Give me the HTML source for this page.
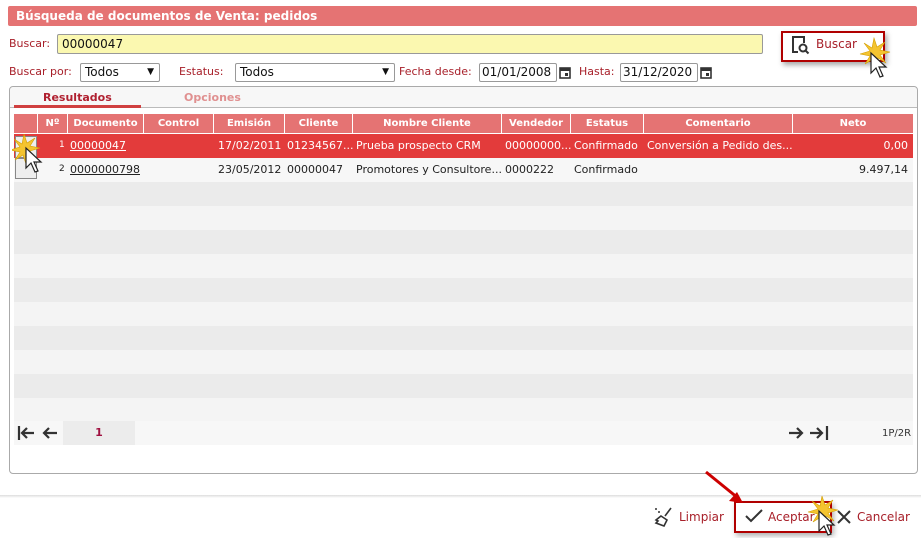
<!DOCTYPE html><html><head><meta charset="utf-8"><style>
*{box-sizing:border-box;margin:0;padding:0}
body{width:921px;height:537px;background:#fff;font-family:Verdana,"DejaVu Sans","Liberation Sans",sans-serif;font-size:11px;position:relative;overflow:hidden;color:#222}
.a{position:absolute;white-space:nowrap}
.lbl{color:#a8202a;font-size:11px}
.inp{position:absolute;border:1px solid #999;border-radius:2px;background:#fff;font-size:12px;padding:0 4px;line-height:17px;color:#111}
.th{position:absolute;top:114px;height:19px;background:#e57373;color:#fff;font-weight:bold;font-size:10px;text-align:center;line-height:19px;border-right:1px solid #fff}
.row{position:absolute;left:14px;width:899px;height:24px}
.c{position:absolute;font-size:11px;line-height:23px;white-space:nowrap}
</style></head><body>
<div class="a" style="left:8px;top:6px;width:909px;height:20px;background:#e57373;border-radius:2px;color:#fff;font-weight:bold;font-size:12px;line-height:20px;padding-left:8px">Búsqueda de documentos de Venta: pedidos</div>
<div class="a lbl" style="left:9px;top:37px">Buscar:</div>
<div class="inp" style="left:57px;top:34px;width:706px;height:20px;background:#fbf8b0;line-height:18px">00000047</div>
<div class="a" style="left:781px;top:31px;width:104px;height:31px;border:2px solid #b00000;box-shadow:2px 3px 5px rgba(0,0,0,.35)"></div>
<svg class="a" style="left:790px;top:34px" width="22" height="22" viewBox="0 0 22 22"><path d="M8 18H3V3h11v6" fill="none" stroke="#333" stroke-width="2"/><circle cx="13" cy="14" r="3.5" fill="none" stroke="#333" stroke-width="2"/><path d="M15.5 16.5l3 3" stroke="#333" stroke-width="2"/></svg>
<div class="a" style="left:816px;top:37px;color:#a8202a;font-size:12px">Buscar</div>
<svg class="a" style="left:858px;top:36px" width="36" height="46" viewBox="0 0 36 46"><path d="M16 2l3 9 8-5-5 8 10 2-10 3 6 8-8-5-2 10-3-9-8 5 5-8-10-2 10-3-6-8 8 5z" fill="#f4c430" stroke="#d39e00" stroke-width=".6"/><path d="M13 17v20l5-5 4 9 3-1-4-9h7z" fill="#fff" stroke="#222" stroke-width="1.2"/></svg>
<div class="a lbl" style="left:9px;top:65px">Buscar por:</div>
<div class="inp" style="left:80px;top:63px;width:80px;height:19px">Todos<span style="position:absolute;right:5px;font-size:9px">▼</span></div>
<div class="a lbl" style="left:179px;top:65px">Estatus:</div>
<div class="inp" style="left:235px;top:63px;width:160px;height:19px">Todos<span style="position:absolute;right:5px;font-size:9px">▼</span></div>
<div class="a lbl" style="left:399px;top:65px">Fecha desde:</div>
<div class="inp" style="left:479px;top:63px;width:78px;height:19px;padding:0 2px">01/01/2008</div>
<svg class="a" style="left:559px;top:66px" width="12" height="13"><rect x="1" y="2" width="10" height="10" fill="none" stroke="#333" stroke-width="1.6"/><rect x="1" y="2" width="10" height="3" fill="#333"/><rect x="6" y="7" width="3" height="3" fill="#333"/></svg>
<div class="a lbl" style="left:579px;top:65px">Hasta:</div>
<div class="inp" style="left:620px;top:63px;width:78px;height:19px;padding:0 2px">31/12/2020</div>
<svg class="a" style="left:700px;top:66px" width="12" height="13"><rect x="1" y="2" width="10" height="10" fill="none" stroke="#333" stroke-width="1.6"/><rect x="1" y="2" width="10" height="3" fill="#333"/><rect x="6" y="7" width="3" height="3" fill="#333"/></svg>
<div class="a" style="left:9px;top:86px;width:909px;height:388px;border:1px solid #aaa;border-radius:4px"></div>
<div class="a" style="left:10px;top:87px;width:907px;height:21px;background:#f7f7f7;border-bottom:1px solid #bbb;border-radius:4px 4px 0 0"></div>
<div class="a" style="left:43px;top:91px;color:#b02030;font-weight:bold;font-size:11px">Resultados</div>
<div class="a" style="left:14px;top:105px;width:127px;height:3px;background:#d04040"></div>
<div class="a" style="left:184px;top:91px;color:#e09090;font-weight:bold;font-size:11px">Opciones</div>
<div class="th" style="left:14px;width:24px"></div>
<div class="th" style="left:38px;width:30px">Nº</div>
<div class="th" style="left:68px;width:76px">Documento</div>
<div class="th" style="left:144px;width:70px">Control</div>
<div class="th" style="left:214px;width:71px">Emisión</div>
<div class="th" style="left:285px;width:68px">Cliente</div>
<div class="th" style="left:353px;width:149px">Nombre Cliente</div>
<div class="th" style="left:502px;width:69px">Vendedor</div>
<div class="th" style="left:571px;width:73px">Estatus</div>
<div class="th" style="left:644px;width:149px">Comentario</div>
<div class="th" style="left:793px;width:120px;border-right:0">Neto</div>
<div class="row" style="top:134px;background:#e33b3b;color:#fff">
<div class="c" style="left:45px;font-size:9px">1</div><div class="c" style="left:56px;text-decoration:underline">00000047</div><div class="c" style="left:204px">17/02/2011</div><div class="c" style="left:273px">01234567...</div><div class="c" style="left:342px">Prueba prospecto CRM</div><div class="c" style="left:491px">00000000...</div><div class="c" style="left:560px">Confirmado</div><div class="c" style="left:633px">Conversión a Pedido des...</div><div class="c" style="right:5px">0,00</div></div>
<div class="row" style="top:158px;background:#f7f7f7">
<div class="c" style="left:45px;font-size:9px">2</div><div class="c" style="left:56px;text-decoration:underline">0000000798</div><div class="c" style="left:204px">23/05/2012</div><div class="c" style="left:273px">00000047</div><div class="c" style="left:342px">Promotores y Consultore...</div><div class="c" style="left:491px">0000222</div><div class="c" style="left:560px">Confirmado</div><div class="c" style="right:5px">9.497,14</div></div>
<div class="row" style="top:182px;background:#ebebeb"></div><div class="row" style="top:206px;background:#f4f4f4"></div>
<div class="row" style="top:230px;background:#ebebeb"></div><div class="row" style="top:254px;background:#f4f4f4"></div>
<div class="row" style="top:278px;background:#ebebeb"></div><div class="row" style="top:302px;background:#f4f4f4"></div>
<div class="row" style="top:326px;background:#ebebeb"></div><div class="row" style="top:350px;background:#f4f4f4"></div>
<div class="row" style="top:374px;background:#ebebeb"></div><div class="row" style="top:398px;background:#f4f4f4"></div>
<div class="a" style="left:15px;top:136px;width:22px;height:22px;border:1px solid #888;background:#eee"></div>
<div class="a" style="left:15px;top:158px;width:22px;height:21px;border:1px solid #888;background:#eee"></div>
<svg class="a" style="left:12px;top:134px" width="40" height="46" viewBox="0 0 40 46"><path d="M12 0l3 9 8-5-5 8 10 2-10 3 6 8-8-5-2 10-3-9-8 5 5-8-10-2 10-3-6-8 8 5z" fill="#f4c430" stroke="#d39e00" stroke-width=".6"/><path d="M14 14v20l5-5 4 9 3-1-4-9h7z" fill="#fff" stroke="#222" stroke-width="1.2"/></svg>
<div class="row" style="top:421px;background:#f7f7f7"></div>
<div class="a" style="left:63px;top:421px;width:72px;height:24px;background:#ececec;color:#a01040;font-weight:bold;text-align:center;line-height:24px">1</div>
<svg class="a" style="left:17px;top:425px" width="44" height="16" viewBox="0 0 44 16"><path d="M2 1v14M17 8H5M10 3L5 8l5 5M40 8H27M32 3l-5 5 5 5" fill="none" stroke="#333" stroke-width="2.2"/></svg>
<svg class="a" style="left:786px;top:425px" width="44" height="16" viewBox="0 0 44 16"><path d="M3 8h13M11 3l5 5-5 5M24 8h12M31 3l5 5-5 5M41 1v14" fill="none" stroke="#333" stroke-width="2.2"/></svg>
<div class="a" style="left:882px;top:428px;font-size:10px;color:#333">1P/2R</div>
<div class="a" style="left:0;top:495px;width:921px;height:3px;background:linear-gradient(#ddd,#fff)"></div>
<svg class="a" style="left:653px;top:506px" width="22" height="22" viewBox="0 0 22 22"><circle cx="3" cy="3" r="1" fill="#333"/><circle cx="6" cy="6" r="1" fill="#333"/><path d="M18 2l-6 8M8 10l6 4-3 6-8-3 2-2-2-1z" fill="none" stroke="#333" stroke-width="1.6"/></svg>
<div class="a" style="left:679px;top:510px;color:#a8202a;font-size:12px">Limpiar</div>
<div class="a" style="left:734px;top:501px;width:98px;height:32px;border:2px solid #b00000;box-shadow:2px 3px 5px rgba(0,0,0,.3)"></div>
<svg class="a" style="left:744px;top:508px" width="20" height="16"><path d="M2 8l5 5L18 2" fill="none" stroke="#333" stroke-width="2"/></svg>
<div class="a" style="left:768px;top:510px;color:#a8202a;font-size:12px">Aceptar</div>
<svg class="a" style="left:806px;top:496px" width="36" height="42" viewBox="0 0 36 42"><path d="M16 0l3 9 8-5-5 8 10 2-10 3 6 8-8-5-2 10-3-9-8 5 5-8-10-2 10-3-6-8 8 5z" fill="#f4c430" stroke="#d39e00" stroke-width=".6"/><path d="M13 15v20l5-5 4 9 3-1-4-9h7z" fill="#fff" stroke="#222" stroke-width="1.2"/></svg>
<svg class="a" style="left:836px;top:509px" width="16" height="16"><path d="M2 2l12 12M14 2L2 14" stroke="#333" stroke-width="2"/></svg>
<div class="a" style="left:857px;top:510px;color:#a8202a;font-size:12px">Cancelar</div>
<svg class="a" style="left:700px;top:468px" width="50" height="40"><path d="M6 4l32 26" stroke="#c00" stroke-width="3"/><path d="M43 35l-14-2 8-9z" fill="#c00"/></svg>
</body></html>
